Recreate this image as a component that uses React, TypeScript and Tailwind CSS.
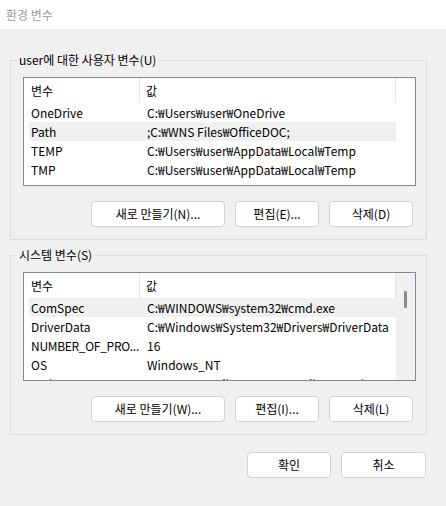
import React from "react";

type Row = { name: string; value: string; hl?: boolean; tight?: boolean };

const userRows: Row[] = [
  { name: "OneDrive", value: "C:₩Users₩user₩OneDrive" },
  { name: "Path", value: ";C:₩WNS Files₩OfficeDOC;", hl: true },
  { name: "TEMP", value: "C:₩Users₩user₩AppData₩Local₩Temp" },
  { name: "TMP", value: "C:₩Users₩user₩AppData₩Local₩Temp" },
];

const sysRows: Row[] = [
  { name: "ComSpec", value: "C:₩WINDOWS₩system32₩cmd.exe", hl: true },
  { name: "DriverData", value: "C:₩Windows₩System32₩Drivers₩DriverData" },
  { name: "NUMBER_OF_PRO...", value: "16", tight: true },
  { name: "OS", value: "Windows_NT" },
  { name: "Path", value: "C:₩Program Files₩Common Files₩Oracle₩Java₩javapath;C:₩WINDOWS" },
];

function Btn({ label, w }: { label: string; w: string }) {
  return (
    <div
      className={`${w} h-[26px] bg-white border border-[#d0d0d0] rounded-[4px] flex items-center justify-center text-[12px] text-black leading-none`}
    >
      {label}
    </div>
  );
}

function List({ rows, scroll }: { rows: Row[]; scroll?: boolean }) {
  return (
    <div className="w-[393px] h-[109px] border border-[#828790] bg-white flex overflow-hidden">
      <div className="w-[372px] flex flex-col overflow-hidden">
        <div className="h-[25px] flex shrink-0 text-[12px] text-black">
          <div className="w-[116px] flex items-center pl-[7px] border-r border-[#e5e5e5]">변수</div>
          <div className="w-[256px] flex items-center pl-[6px] border-r border-[#e5e5e5]">값</div>
        </div>
        {rows.map((r, i) => (
          <div
            key={i}
            className={`h-[19px] shrink-0 flex ml-[5px] w-[367px] text-[12px] text-black whitespace-nowrap ${r.hl ? "bg-[#f0f0f0]" : ""}`}
          >
            <div
              className={`w-[111px] pl-[2px] flex items-center overflow-hidden ${r.tight ? "tracking-[-0.3px]" : ""}`}
            >
              {r.name}
            </div>
            <div className="w-[256px] pl-[7px] flex items-center overflow-hidden">{r.value}</div>
          </div>
        ))}
      </div>
      {scroll ? (
        <div className="w-[19px] h-full bg-[#f0f0f0] flex justify-center pt-[18px]">
          <div className="w-[3px] h-[17px] bg-[#8a8a8a] rounded-[1px]" />
        </div>
      ) : (
        <div className="w-[19px] h-full bg-white" />
      )}
    </div>
  );
}

function Group({
  legend,
  rows,
  scroll,
  buttons,
  mt,
}: {
  legend: string;
  rows: Row[];
  scroll?: boolean;
  buttons: string[];
  mt: string;
}) {
  return (
    <div className={`relative ml-[10px] ${mt} w-[417px] border border-[#dcdcdc] pt-[16px] px-[12px] pb-[12px]`}>
      <span className="absolute -top-[9px] left-[6px] px-[2px] bg-[#f0f0f0] text-[12px] leading-[16px] text-black">
        {legend}
      </span>
      <List rows={rows} scroll={scroll} />
      <div className="mt-[15px] flex justify-end gap-[10px] pr-[1px]">
        <Btn label={buttons[0]} w="w-[134px]" />
        <Btn label={buttons[1]} w="w-[84px]" />
        <Btn label={buttons[2]} w="w-[84px]" />
      </div>
    </div>
  );
}

export default function App() {
  return (
    <div className="w-[446px] h-[506px] bg-[#f0f0f0] font-['Noto_Sans_CJK_KR',sans-serif] overflow-hidden">
      <div className="h-[29px] bg-white flex items-center pl-[6px] text-[12px] text-[#9b9b9b]">환경 변수</div>
      <Group
        legend="user에 대한 사용자 변수(U)"
        rows={userRows}
        buttons={["새로 만들기(N)...", "편집(E)...", "삭제(D)"]}
        mt="mt-[31px]"
      />
      <Group
        legend="시스템 변수(S)"
        rows={sysRows}
        scroll
        buttons={["새로 만들기(W)...", "편집(I)...", "삭제(L)"]}
        mt="mt-[15px]"
      />
      <div className="mt-[17px] flex justify-end gap-[10px] pr-[20px]">
        <Btn label="확인" w="w-[84px]" />
        <Btn label="취소" w="w-[85px]" />
      </div>
    </div>
  );
}
